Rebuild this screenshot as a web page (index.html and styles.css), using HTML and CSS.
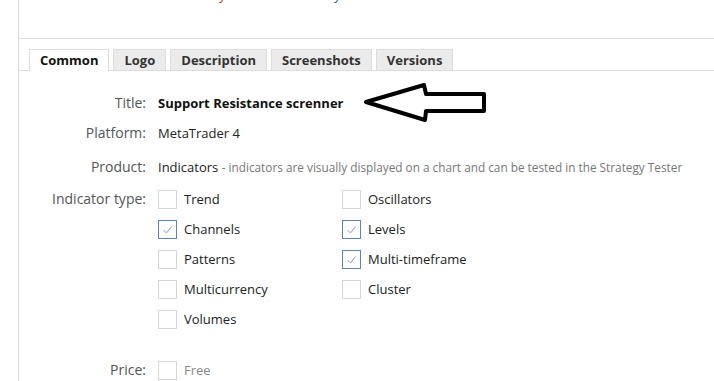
FILE: index.html
```html
<!DOCTYPE html>
<html lang="en">
<head>
    <meta charset="UTF-8">
    <title>Product - Common</title>
    <link rel="stylesheet" href="styles.css">
</head>
<body>
<div class="page">
    <div class="top-area">
        <span class="cut red">y</span><span class="cut blue">y</span>
    </div>

    <div class="tab-nav">
        <ul>
            <li class="active">Common</li>
            <li>Logo</li>
            <li>Description</li>
            <li>Screenshots</li>
            <li>Versions</li>
        </ul>
    </div>

    <div class="form">
        <div class="row row-title">
            <div class="label">Title:</div>
            <div class="value strong">Support Resistance screnner</div>
        </div>
        <div class="row row-platform">
            <div class="label">Platform:</div>
            <div class="value">MetaTrader 4</div>
        </div>
        <div class="row row-product">
            <div class="label">Product:</div>
            <div class="value">Indicators <span class="hint">- indicators are visually displayed on a chart and can be tested in the Strategy Tester</span></div>
        </div>
        <div class="row row-types">
            <div class="label">Indicator type:</div>
            <div class="checks">
                <div class="check"><span class="box"></span>Trend</div>
                <div class="check"><span class="box"></span>Oscillators</div>
                <div class="check"><span class="box checked"><svg viewBox="0 0 17 17"><path d="M4.5 9 L7.5 12 L12.5 5.5"/></svg></span>Channels</div>
                <div class="check"><span class="box checked"><svg viewBox="0 0 17 17"><path d="M4.5 9 L7.5 12 L12.5 5.5"/></svg></span>Levels</div>
                <div class="check"><span class="box"></span>Patterns</div>
                <div class="check"><span class="box checked"><svg viewBox="0 0 17 17"><path d="M4.5 9 L7.5 12 L12.5 5.5"/></svg></span>Multi-timeframe</div>
                <div class="check"><span class="box"></span>Multicurrency</div>
                <div class="check"><span class="box"></span>Cluster</div>
                <div class="check"><span class="box"></span>Volumes</div>
            </div>
        </div>
        <div class="row row-price">
            <div class="label">Price:</div>
            <div class="check muted"><span class="box"></span>Free</div>
        </div>
    </div>

    <!-- hand-drawn arrow pointing at the title -->
    <svg class="arrow" width="130" height="44" viewBox="0 0 130 44">
        <path d="M4 20 L62 3 L64 12 L122 12 L122 29 L64 29 L63 38 Z"/>
    </svg>
</div>
</body>
</html>
```

FILE: styles.css
```css
body {
    margin: 0;
    background: #fff;
    font-family: "Open Sans", "Liberation Sans", sans-serif;
    font-size: 13px;
    color: #222;
}

ul, li {
    margin: 0;
    padding: 0;
    list-style: none;
}

.page {
    position: relative;
    margin-left: 18px;
    border-left: 1px solid #dcdcdc;
    min-height: 381px;
}

.top-area {
    height: 38px;
    border-bottom: 1px solid #dcdcdc;
    position: relative;
    overflow: hidden;
}

.cut {
    position: absolute;
    top: -14px;
    font-size: 13px;
}

.cut.red {
    left: 200px;
    color: #c0392b;
}

.cut.blue {
    left: 315px;
    color: #3b4fa0;
}

.tab-nav {
    padding: 10px 0 0 10px;
    border-bottom: 1px solid #dcdcdc;
}

.tab-nav ul {
    display: flex;
    gap: 4px;
}

.tab-nav li {
    height: 20px;
    line-height: 20px;
    padding: 0 10px;
    margin-bottom: -1px;
    background: #ebebeb;
    border: 1px solid #dcdcdc;
    border-bottom: none;
    font-weight: bold;
    color: #333;
}

.tab-nav li.active {
    background: #fff;
    height: 21px;
    color: #111;
}

.form {
    padding-top: 17px;
}

.row {
    display: flex;
    align-items: flex-start;
}

.label {
    width: 127px;
    height: 30px;
    line-height: 30px;
    text-align: right;
    font-size: 14px;
    color: #555;
    flex-shrink: 0;
    margin-right: 12px;
}

.value {
    height: 30px;
    line-height: 30px;
}

.value.strong {
    font-weight: bold;
    color: #111;
}

.row-product {
    margin-top: 4px;
}

.row-types {
    margin-top: 2px;
}

.hint {
    font-size: 11.8px;
    line-height: 20px;
    color: #777;
}

.checks {
    display: grid;
    grid-template-columns: 184px auto;
    grid-auto-rows: 30px;
}

.check {
    display: flex;
    align-items: center;
    height: 30px;
}

.box {
    width: 17px;
    height: 17px;
    border: 1px solid #d6d6d6;
    margin-right: 7px;
    flex-shrink: 0;
    display: flex;
}

.box.checked {
    border-color: #5f82b8;
}

.box svg {
    width: 17px;
    height: 17px;
    fill: none;
    stroke: #7f9fcc;
    stroke-width: 1;
}

.row-price {
    margin-top: 21px;
}

.check.muted {
    color: #888;
}

.arrow {
    position: absolute;
    left: 343px;
    top: 82px;
}

.arrow path {
    fill: #fff;
    stroke: #000;
    stroke-width: 4;
    stroke-linejoin: round;
}
```
